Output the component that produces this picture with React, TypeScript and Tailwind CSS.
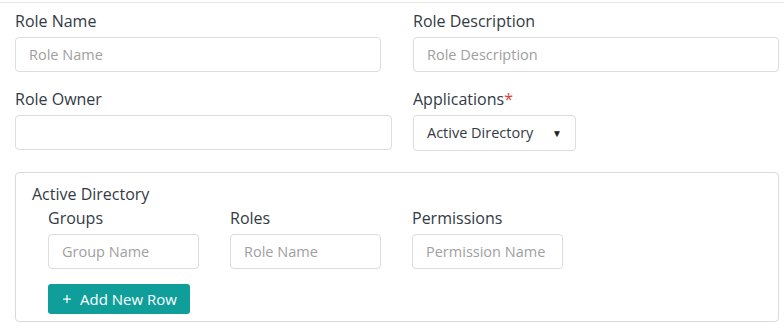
import { Plus } from "lucide-react";

const font = { fontFamily: '"Open Sans", "Noto Sans", sans-serif' };

function Label({ text, required = false }: { text: string; required?: boolean }) {
  return (
    <div className="mb-[5px] text-[16px] leading-[22px] text-[#333a45]">
      {text}
      {required && <span className="text-[#e53935]">*</span>}
    </div>
  );
}

function TextInput({ placeholder, width }: { placeholder?: string; width: string }) {
  return (
    <input
      placeholder={placeholder}
      className={`${width} h-[35px] rounded-[4px] border border-[#dcdcdc] bg-white px-[13px] text-[14.5px] text-[#333a45] outline-none placeholder:text-[#a0a0a0]`}
    />
  );
}

export default function App() {
  return (
    <div style={font} className="h-[328px] w-[784px] overflow-hidden bg-white">
      <div className="mt-[2px] border-t border-[#e6e6e6]" />
      <div className="px-[15px] pt-[7px]">
        <div className="flex gap-[32px]">
          <div className="w-[366px]">
            <Label text="Role Name" />
            <TextInput placeholder="Role Name" width="w-[366px]" />
          </div>
          <div className="w-[366px]">
            <Label text="Role Description" />
            <TextInput placeholder="Role Description" width="w-[366px]" />
          </div>
        </div>

        <div className="mt-[16px] flex gap-[32px]">
          <div className="w-[366px]">
            <Label text="Role Owner" />
            <TextInput width="w-[377px]" />
          </div>
          <div className="w-[366px]">
            <Label text="Applications" required />
            <div className="flex h-[36px] w-[163px] items-center justify-between rounded-[4px] border border-[#dcdcdc] bg-white pl-[13px] pr-[13px] text-[14.5px] text-[#333a45]">
              <span>Active Directory</span>
              <span className="text-[10px] text-[#222]">▼</span>
            </div>
          </div>
        </div>

        <div className="mt-[21px] h-[150px] w-[764px] rounded-[4px] border border-[#d9d9d9] pl-[16px] pt-[10px]">
          <div className="text-[16px] leading-[22px] text-[#333a45]">Active Directory</div>
          <div className="ml-[16px] mt-[2px]">
            <div className="flex gap-[31px]">
              <div className="w-[151px]">
                <Label text="Groups" />
                <TextInput placeholder="Group Name" width="w-[151px]" />
              </div>
              <div className="w-[151px]">
                <Label text="Roles" />
                <TextInput placeholder="Role Name" width="w-[151px]" />
              </div>
              <div className="w-[151px]">
                <Label text="Permissions" />
                <TextInput placeholder="Permission Name" width="w-[151px]" />
              </div>
            </div>
            <button className="mt-[15px] flex h-[30px] w-[142px] items-center justify-center gap-[7px] rounded-[3px] bg-[#0f9e9a] text-[15px] text-white">
              <Plus size={12} strokeWidth={2.5} />
              <span>Add New Row</span>
            </button>
          </div>
        </div>
      </div>
    </div>
  );
}
